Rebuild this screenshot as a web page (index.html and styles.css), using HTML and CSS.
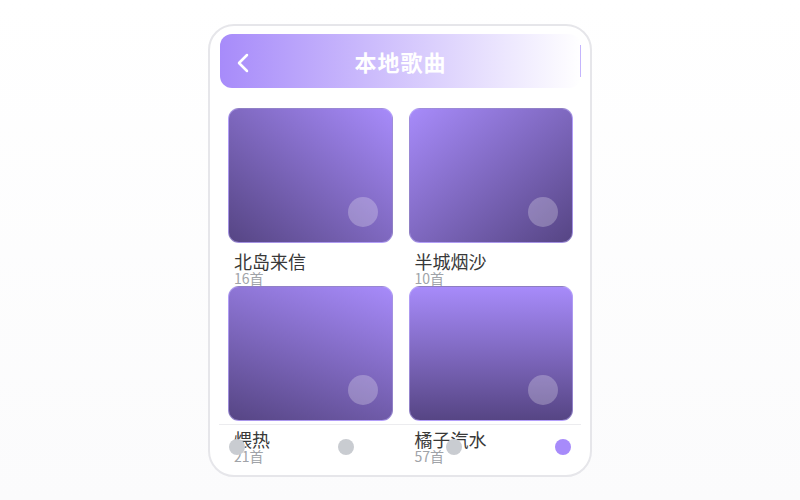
FILE: index.html
```html
<!DOCTYPE html>
<html lang="zh">
<head>
  <meta charset="UTF-8">
  <title>本地歌曲</title>
  <meta name="viewport" content="width=device-width, initial-scale=1.0">
  <link rel="stylesheet" href="styles.css">
</head>
<body>
  <div class="phone">
    <header class="top-bar">
      <button class="back" aria-label="返回">
        <svg width="16" height="20" viewBox="0 0 16 20" fill="none">
          <path d="M12 2 L4 10 L12 18" stroke="#fff" stroke-width="2.5" stroke-linecap="round" stroke-linejoin="round"/>
        </svg>
      </button>
      <h1>本地歌曲</h1>
      <span class="spacer"></span>
    </header>

    <div class="album-grid">
      <div class="album">
        <div class="cover cover-1"><span class="play"></span></div>
        <div class="name">北岛来信</div>
        <div class="count">16首</div>
      </div>
      <div class="album">
        <div class="cover cover-2"><span class="play"></span></div>
        <div class="name">半城烟沙</div>
        <div class="count">10首</div>
      </div>
      <div class="album">
        <div class="cover cover-3"><span class="play"></span></div>
        <div class="name">煨热</div>
        <div class="count">21首</div>
      </div>
      <div class="album">
        <div class="cover cover-4"><span class="play"></span></div>
        <div class="name">橘子汽水</div>
        <div class="count">57首</div>
      </div>
    </div>

    <nav class="tab-bar">
      <span class="dot"></span>
      <span class="dot"></span>
      <span class="dot"></span>
      <span class="dot active"></span>
    </nav>
  </div>
</body>
</html>
```

FILE: styles.css
```css
:root {
  --purple: #a78bfa;
  --purple-dark: #564584;
  --text-color: #383838;
  --muted: #a0a3a8;
}

* {
  box-sizing: border-box;
}

body {
  margin: 0;
  min-height: 100vh;
  font-family: "Noto Sans CJK SC", "Noto Sans", sans-serif;
  background: linear-gradient(#fff, #fbfbfc);
  display: flex;
  align-items: center;
  justify-content: center;
}

.phone {
  position: relative;
  width: 384px;
  height: 453px;
  margin-top: 1px;
  border: 2px solid #e6e6ea;
  border-radius: 26px;
  background: #fff;
  padding: 8px 9px 8px 10px;
  overflow: hidden;
  display: flex;
  flex-direction: column;
}

.top-bar {
  position: relative;
  flex: none;
  height: 54px;
  border-radius: 12px;
  background: linear-gradient(to right, #a78bfa, #fff);
  display: flex;
  align-items: center;
  padding: 0 15px;
}

/* thin divider on the right edge of the bar */
.top-bar::after {
  content: "";
  position: absolute;
  right: 0;
  top: 11px;
  bottom: 11px;
  width: 1px;
  background: #c4b5fd;
}

.back {
  width: 32px;
  height: 32px;
  padding: 0;
  margin-top: 3px;
  border: none;
  background: none;
  display: flex;
  align-items: center;
  cursor: pointer;
}

.top-bar h1 {
  flex: 1;
  margin: 0;
  text-align: center;
  color: #fff;
  font-size: 22px;
  font-weight: 700;
  letter-spacing: 1px;
}

.spacer {
  width: 32px;
}

.album-grid {
  flex: 1;
  display: grid;
  grid-template-columns: 1fr 1fr;
  grid-auto-rows: 178px;
  column-gap: 16px;
  padding: 20px 8px 0;
}

.album {
  min-width: 0;
}

.cover {
  position: relative;
  height: 135px;
  border-radius: 11px;
  border: 1px solid rgba(196, 181, 253, 0.5);
}

.cover-1 {
  background: linear-gradient(to bottom left, var(--purple), var(--purple-dark));
}

.cover-2 {
  background: linear-gradient(to bottom right, var(--purple), var(--purple-dark));
}

.cover-3 {
  background: linear-gradient(200deg, var(--purple), var(--purple-dark));
}

.cover-4 {
  background: linear-gradient(to bottom, var(--purple), var(--purple-dark));
}

.play {
  position: absolute;
  right: 14px;
  bottom: 15px;
  width: 30px;
  height: 30px;
  border-radius: 50%;
  background: rgba(255, 255, 255, 0.25);
}

.name {
  margin-top: 8px;
  padding-left: 6px;
  font-size: 18px;
  line-height: 20px;
  color: var(--text-color);
}

.count {
  padding-left: 6px;
  font-size: 14px;
  line-height: 15px;
  color: var(--muted);
}

.tab-bar {
  position: absolute;
  left: 9px;
  right: 9px;
  bottom: 6px;
  height: 45px;
  border-top: 1px solid #ececef;
  padding: 0 10px;
  display: flex;
  align-items: center;
  justify-content: space-between;
}

.dot {
  width: 16px;
  height: 16px;
  border-radius: 50%;
  background: #c9ccd1;
}

.dot.active {
  background: var(--purple);
}
```
